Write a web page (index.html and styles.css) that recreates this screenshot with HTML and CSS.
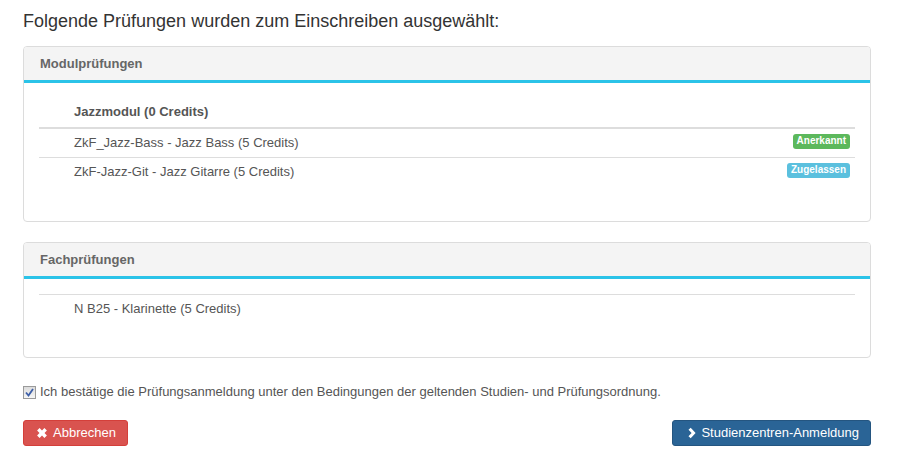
FILE: index.html
```html
<!DOCTYPE html>
<html lang="de">
<head>
<meta charset="utf-8">
<title>Prüfungsanmeldung</title>
<link rel="stylesheet" href="styles.css">
</head>
<body>
<div class="page">
  <h3 class="title">Folgende Prüfungen wurden zum Einschreiben ausgewählt:</h3>

  <div class="panel">
    <div class="panel-heading">Modulprüfungen</div>
    <div class="panel-body">
      <div class="list">
        <div class="list-head">Jazzmodul (0 Credits)</div>
        <div class="list-row first">
          <span class="label label-success">Anerkannt</span>
          ZkF_Jazz-Bass - Jazz Bass (5 Credits)
        </div>
        <div class="list-row">
          <span class="label label-info">Zugelassen</span>
          ZkF-Jazz-Git - Jazz Gitarre (5 Credits)
        </div>
      </div>
    </div>
  </div>

  <div class="panel">
    <div class="panel-heading">Fachprüfungen</div>
    <div class="panel-body">
      <div class="list">
        <div class="list-row">N B25 - Klarinette (5 Credits)</div>
      </div>
    </div>
  </div>

  <label class="confirm">
    <span class="checkbox">
      <svg width="9" height="9" viewBox="0 0 9 9"><path d="M1 4.5 L3.5 7.5 L8 1" fill="none" stroke="#3d5fa8" stroke-width="1.8"/></svg>
    </span>
    Ich bestätige die Prüfungsanmeldung unter den Bedingungen der geltenden Studien- und Prüfungsordnung.
  </label>

  <div class="actions">
    <button class="btn btn-danger" type="button">
      <svg class="icon" width="12" height="12" viewBox="0 0 11 11"><path d="M1 3.3 L3.3 1 L5.5 3.2 L7.7 1 L10 3.3 L7.8 5.5 L10 7.7 L7.7 10 L5.5 7.8 L3.3 10 L1 7.7 L3.2 5.5 Z" fill="#fff"/></svg>
      Abbrechen
    </button>
    <button class="btn btn-primary" type="button">
      <svg class="icon" width="9" height="12" viewBox="0 0 9 11"><path d="M1.5 2.2 L3.7 0.2 L8.6 5.5 L3.7 10.8 L1.5 8.8 L4.6 5.5 Z" fill="#fff"/></svg>
      Studienzentren-Anmeldung
    </button>
  </div>
</div>
</body>
</html>
```

FILE: styles.css
```css
* { box-sizing: border-box; }

body {
  margin: 0;
  background: #fff;
  font-family: "Liberation Sans", Arial, sans-serif;
  font-size: 13px;
  line-height: 1.42857;
  color: #555;
}

.page {
  width: 848px;
  margin-left: 23px;
}

.title {
  margin: 0 0 15px;
  padding-top: 11px;
  font-size: 18px;
  font-weight: normal;
  line-height: 20px;
  color: #333;
}

.panel {
  border: 1px solid #dcdcdc;
  border-radius: 4px;
  margin-bottom: 20px;
  background: #fff;
}

.panel-heading {
  height: 36px;
  padding: 0 16px;
  line-height: 33px;
  font-weight: bold;
  color: #666;
  background: #f4f4f4;
  border-bottom: 3px solid #2bc3e8;
  border-radius: 3px 3px 0 0;
}

.panel-body {
  padding: 15px;
}

.list {
  margin-bottom: 19px;
}

.list-head {
  padding: 5px 5px 5px 35px;
  font-weight: bold;
  color: #555;
  border-bottom: 2px solid #ddd;
}

.list-row {
  padding: 5px 5px 5px 35px;
  border-top: 1px solid #ddd;
}

.list-row.first {
  border-top: 0;
}

.label {
  float: right;
  display: inline-block;
  padding: 2px 4px 3px;
  font-size: 10px;
  font-weight: bold;
  line-height: 1;
  color: #fff;
  border-radius: 3px;
}

.label-success { background: #5cb85c; }
.label-info { background: #5bc0de; }

.confirm {
  display: flex;
  align-items: center;
  gap: 4px;
  margin-top: 25px;
  color: #555;
}

.checkbox {
  display: inline-flex;
  align-items: center;
  justify-content: center;
  width: 13px;
  height: 13px;
  border: 1px solid #9a9a9a;
  background: linear-gradient(#dcdcdc, #f6f6f6);
}

.actions {
  display: flex;
  justify-content: space-between;
  margin-top: 18px;
}

.btn {
  display: inline-flex;
  align-items: center;
  gap: 5px;
  height: 26px;
  padding: 0 11px 0 12px;
  font-family: "Liberation Sans", Arial, sans-serif;
  font-size: 13px;
  color: #fff;
  border: 1px solid transparent;
  border-radius: 3px;
}

.btn-danger {
  background: #d9534f;
  border-color: #d43f3a;
}

.btn-primary {
  background: #2a6496;
  border-color: #245580;
  padding-left: 14px;
}

.icon { flex: none; }
```
